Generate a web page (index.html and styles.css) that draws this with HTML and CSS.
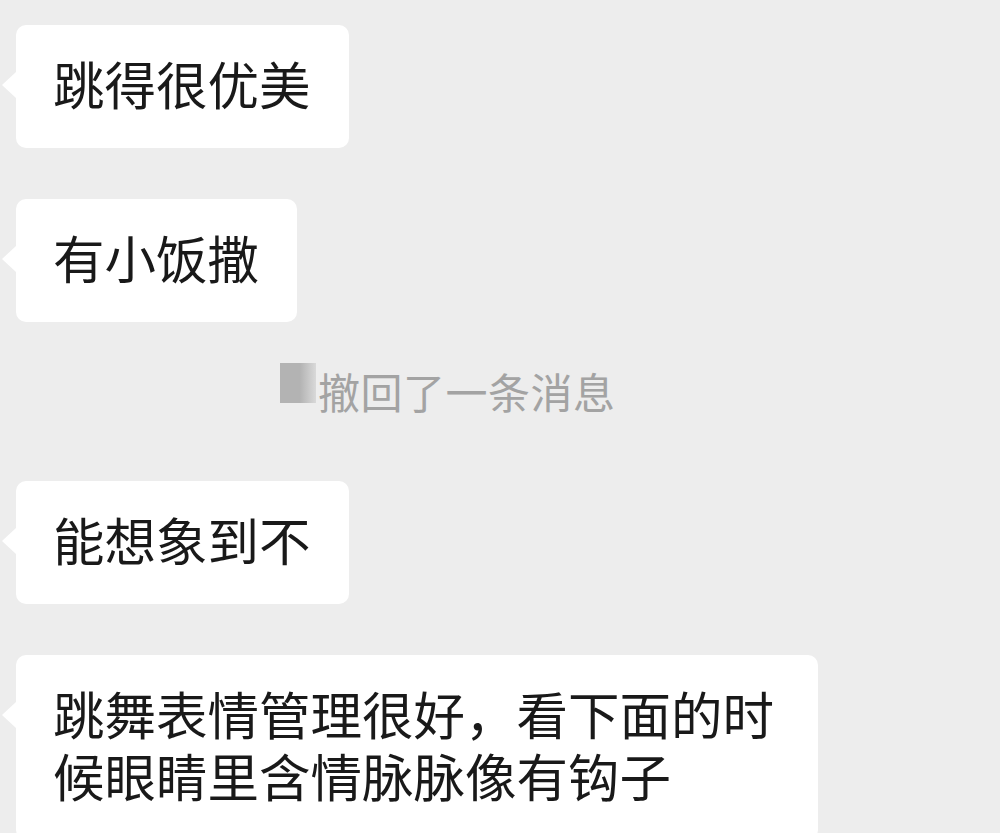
FILE: index.html
```html
<!DOCTYPE html>
<html lang="zh-CN">
<head>
  <meta charset="UTF-8" />
  <meta name="viewport" content="width=device-width, initial-scale=1.0" />
  <title>聊天记录</title>
  <link rel="stylesheet" href="styles.css">
</head>
<body>
  <div class="chat">
    <div class="msg"><div class="bubble">跳得很优美</div></div>
    <div class="msg"><div class="bubble">有小饭撒</div></div>

    <div class="recall">
      <span class="recall-name"></span>
      <span class="recall-text">撤回了一条消息</span>
    </div>

    <div class="msg"><div class="bubble">能想象到不</div></div>
    <div class="msg"><div class="bubble">跳舞表情管理很好，看下面的时候眼睛里含情脉脉像有钩子</div></div>
  </div>
</body>
</html>
```

FILE: styles.css
```css
body {
  margin: 0;
  background-color: #ededed;
  font-family: "Noto Sans CJK SC", "Noto Sans", sans-serif;
  color: #191919;
}
.chat {
  display: flex;
  flex-direction: column;
  padding: 25px 0 0 16px;
  gap: 51px;
}
.msg {
  display: flex;
}
.bubble {
  position: relative;
  background: #fff;
  border-radius: 10px;
  font-size: 51.5px;
  line-height: 62px;
  padding: 27px 38px 34px 37px;
  max-width: 802px;
  box-sizing: border-box;
}
.bubble::before {
  content: "";
  position: absolute;
  left: -14px;
  top: 47px;
  border-top: 13px solid transparent;
  border-bottom: 13px solid transparent;
  border-right: 14px solid #fff;
}
.recall {
  display: flex;
  align-items: center;
  height: 40px;
  margin-bottom: 17px;
  padding-left: 264px;
}
.recall-name {
  width: 36px;
  height: 40px;
  margin-top: -20px;
  background: linear-gradient(to right, #b3b3b3 55%, #d9d9d9 100%);
}
.recall-text {
  font-size: 42px;
  line-height: 40px;
  color: #a3a3a3;
  margin-left: 2px;
  margin-top: -4px;
  letter-spacing: 0.5px;
}
```
